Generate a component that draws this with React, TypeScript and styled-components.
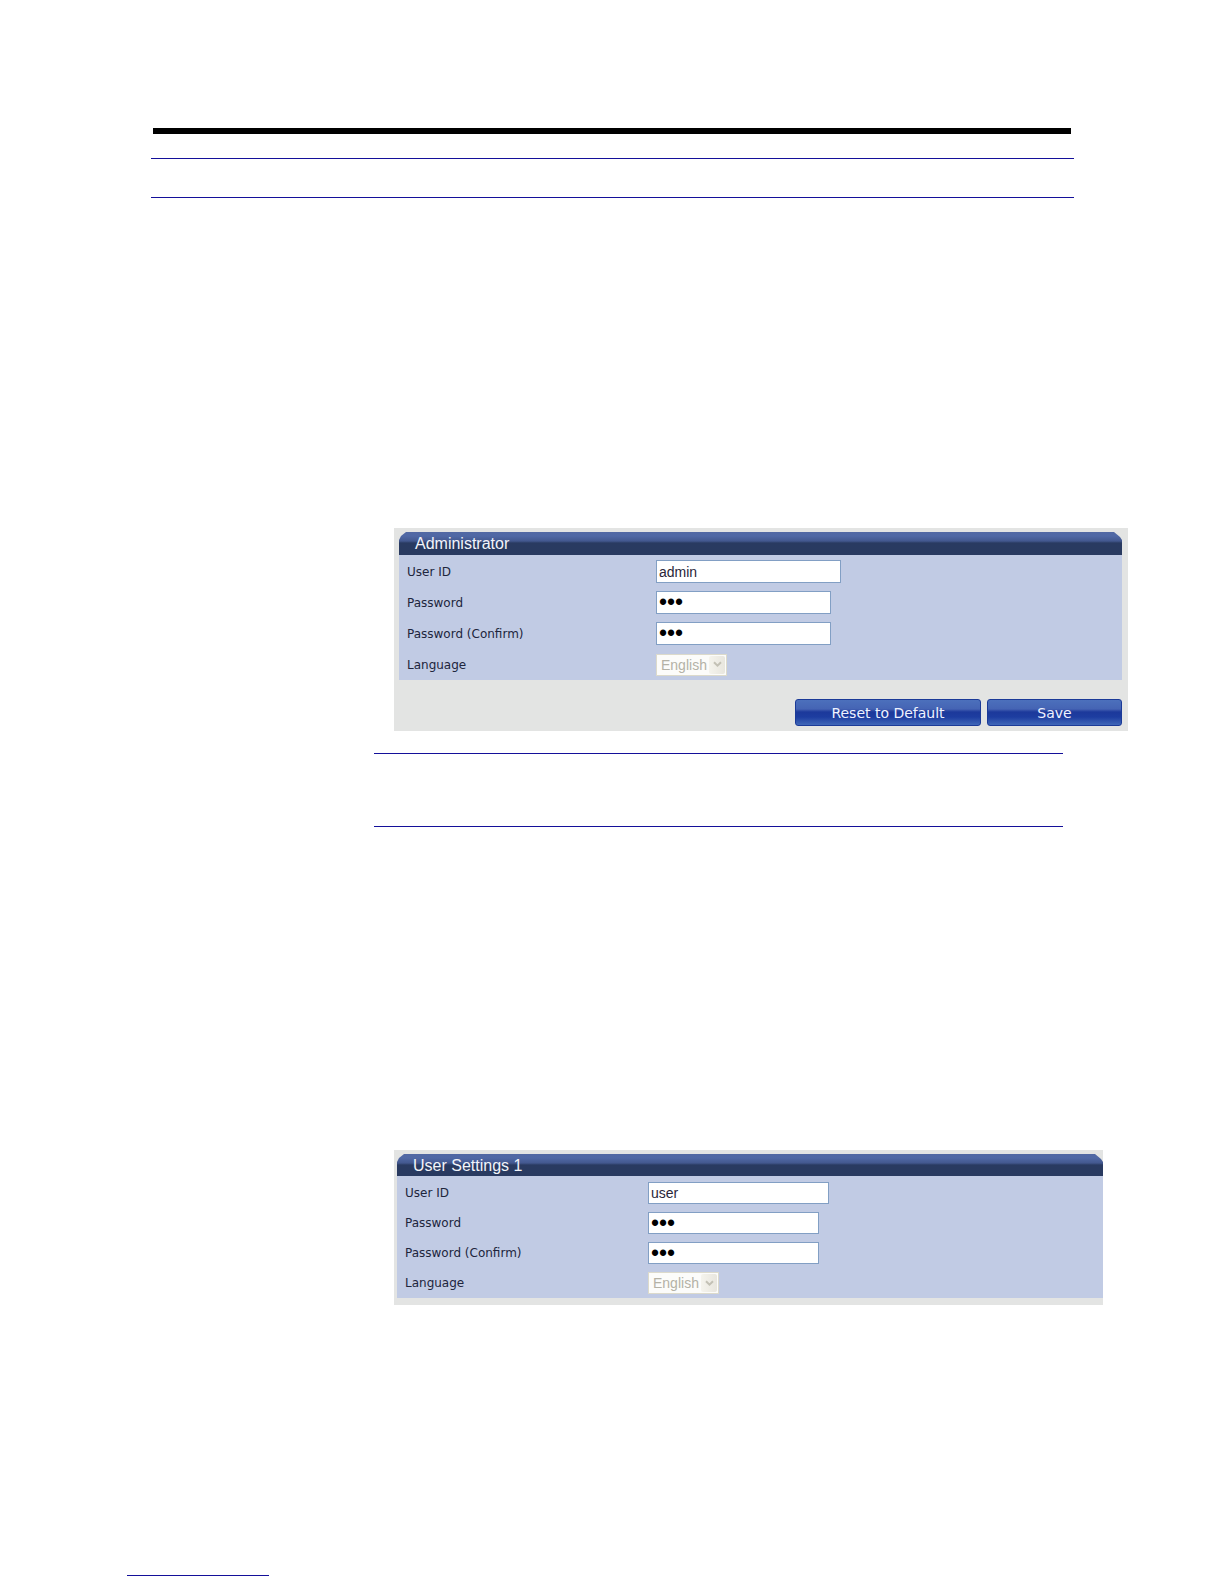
import React, { useId } from "react";
import styled, { createGlobalStyle } from "styled-components";

const GlobalStyle = createGlobalStyle`
  * { box-sizing: border-box; }
  body {
    margin: 0;
    background: #fff;
    font-family: "DejaVu Sans", Verdana, sans-serif;
    font-size: 12px;
  }
`;

const Page = styled.div`
  display: flex;
  flex-direction: column;
  padding: 128px 96px 8px 127px;
`;

const PageHeader = styled.header`
  margin: 0 54px 330px 24px;
`;

const TopBar = styled.div`
  height: 6px;
  margin: 0 3px 24px 2px;
  background: #000;
`;

const RuledBox = styled.div<{ $height: number }>`
  height: ${(p) => p.$height}px;
  border-top: 1px solid #14109a;
  border-bottom: 1px solid #14109a;
`;

const Content = styled.main`
  padding-left: 247px;
`;

const Note = styled.aside`
  margin: 22px 65px 323px 0;
`;

const Panel = styled.form<{ $inset: string }>`
  margin: 0 0 0 20px;
  padding: ${(p) => p.$inset};
  background: #e3e4e3;
`;

const SecondPanel = styled(Panel)`
  margin-right: 25px;
`;

const PanelTitle = styled.h2<{ $height: number }>`
  height: ${(p) => p.$height}px;
  margin: 0;
  padding-left: 16px;
  overflow: hidden;
  color: #f2f4fa;
  font: 400 16px/23px "Liberation Sans", Arial, sans-serif;
  background: linear-gradient(#5268a3 0, #5068a5 4px, #43588f 9px, #293a61 11px, #293a60 100%);
  clip-path: polygon(0 8px, 2px 4px, 7px 0, calc(100% - 8px) 0, calc(100% - 2px) 5px, 100% 8px, 100% 100%, 0 100%);
`;

const Fields = styled.div<{ $top: number }>`
  padding-top: ${(p) => p.$top}px;
  background: #c1cbe4;
`;

const Row = styled.div<{ $height: number; $labelWidth: number }>`
  display: grid;
  grid-template-columns: ${(p) => p.$labelWidth}px 1fr;
  align-items: center;
  height: ${(p) => p.$height}px;
  padding-left: 8px;
`;

const Label = styled.label`
  color: #20253c;
  font-size: 12px;
  line-height: 16px;
`;

const TextInput = styled.input<{ $width: number; $height: number }>`
  width: ${(p) => p.$width}px;
  height: ${(p) => p.$height}px;
  padding: 0 2px;
  border: 1px solid #829fc4;
  border-radius: 0;
  outline: 0;
  background: #fff;
  color: #292538;
  font: 14px "Liberation Sans", Arial, sans-serif;

  &[type="password"] {
    color: #000;
    font-size: 23px;
  }
`;

const SelectBox = styled.div`
  display: grid;
  width: 71px;
  height: 22px;
  border: 1px solid #dcdacb;
  background: #fcfcfa;

  & > * { grid-area: 1 / 1; }
`;

const Select = styled.select`
  appearance: none;
  width: 100%;
  padding: 0 18px 0 4px;
  border: 0;
  background: transparent;
  color: #b4b2a6;
  opacity: 1;
  font: 14px "Liberation Sans", Arial, sans-serif;
`;

const Arrow = styled.span`
  display: flex;
  align-items: center;
  justify-content: center;
  justify-self: end;
  width: 16px;
  margin: 1px;
  background: linear-gradient(90deg, #f5f4ed, #e8e6de);
  border-radius: 2px;
  pointer-events: none;
`;

const Actions = styled.div`
  display: flex;
  justify-content: flex-end;
  gap: 6px;
  margin-top: 19px;
`;

const Button = styled.button<{ $width: number }>`
  width: ${(p) => p.$width}px;
  height: 27px;
  padding: 0;
  border: 1px solid #1b3a98;
  border-radius: 3px;
  background: linear-gradient(#4c70bc 0, #4564b4 9px, #3854aa 10px, #1c399b 12px, #1d3da0 17px, #4067b8 100%);
  color: #eef2ff;
  font: 14px/20px "DejaVu Sans", Verdana, sans-serif;
`;

const FooterRule = styled.hr`
  width: 142px;
  height: 1px;
  margin: 270px 0 0;
  border: 0;
  background: #14109a;
`;

type Metrics = {
  rowHeight: number;
  labelWidth: number;
  inputHeight: number;
  idWidth: number;
  passwordWidth: number;
};

function AccountFields({ userId, top, metrics }: { userId: string; top: number; metrics: Metrics }) {
  const id = useId();
  const row = { $height: metrics.rowHeight, $labelWidth: metrics.labelWidth };
  return (
    <Fields $top={top}>
      <Row {...row}>
        <Label htmlFor={`${id}-user`}>User ID</Label>
        <TextInput id={`${id}-user`} defaultValue={userId} $width={metrics.idWidth} $height={metrics.inputHeight} />
      </Row>
      <Row {...row}>
        <Label htmlFor={`${id}-pw`}>Password</Label>
        <TextInput id={`${id}-pw`} type="password" autoComplete="off" defaultValue="abc" $width={metrics.passwordWidth} $height={metrics.inputHeight} />
      </Row>
      <Row {...row}>
        <Label htmlFor={`${id}-confirm`}>Password (Confirm)</Label>
        <TextInput id={`${id}-confirm`} type="password" autoComplete="off" defaultValue="abc" $width={metrics.passwordWidth} $height={metrics.inputHeight} />
      </Row>
      <Row {...row}>
        <Label htmlFor={`${id}-lang`}>Language</Label>
        <SelectBox>
          <Select id={`${id}-lang`} disabled defaultValue="en">
            <option value="en">English</option>
          </Select>
          <Arrow>
            <svg width="9" height="7" viewBox="0 0 9 7" aria-hidden="true">
              <path d="M1 1.2 4.5 4.7 8 1.2" fill="none" stroke="#c3c1b5" strokeWidth="2" />
            </svg>
          </Arrow>
        </SelectBox>
      </Row>
    </Fields>
  );
}

const adminMetrics: Metrics = { rowHeight: 31, labelWidth: 249, inputHeight: 23, idWidth: 185, passwordWidth: 175 };
const userMetrics: Metrics = { rowHeight: 30, labelWidth: 243, inputHeight: 22, idWidth: 181, passwordWidth: 171 };

export default function App() {
  return (
    <>
      <GlobalStyle />
      <Page>
        <PageHeader>
          <TopBar />
          <RuledBox $height={40} />
        </PageHeader>
        <Content>
          <Panel $inset="4px 6px 5px 5px" onSubmit={(e) => e.preventDefault()}>
            <PanelTitle $height={23}>Administrator</PanelTitle>
            <AccountFields userId="admin" top={1} metrics={adminMetrics} />
            <Actions>
              <Button type="reset" $width={186}>Reset to Default</Button>
              <Button type="submit" $width={135}>Save</Button>
            </Actions>
          </Panel>
          <Note>
            <RuledBox $height={74} />
          </Note>
          <SecondPanel $inset="4px 0 7px 3px" onSubmit={(e) => e.preventDefault()}>
            <PanelTitle $height={22}>User Settings 1</PanelTitle>
            <AccountFields userId="user" top={2} metrics={userMetrics} />
          </SecondPanel>
        </Content>
        <FooterRule />
      </Page>
    </>
  );
}
